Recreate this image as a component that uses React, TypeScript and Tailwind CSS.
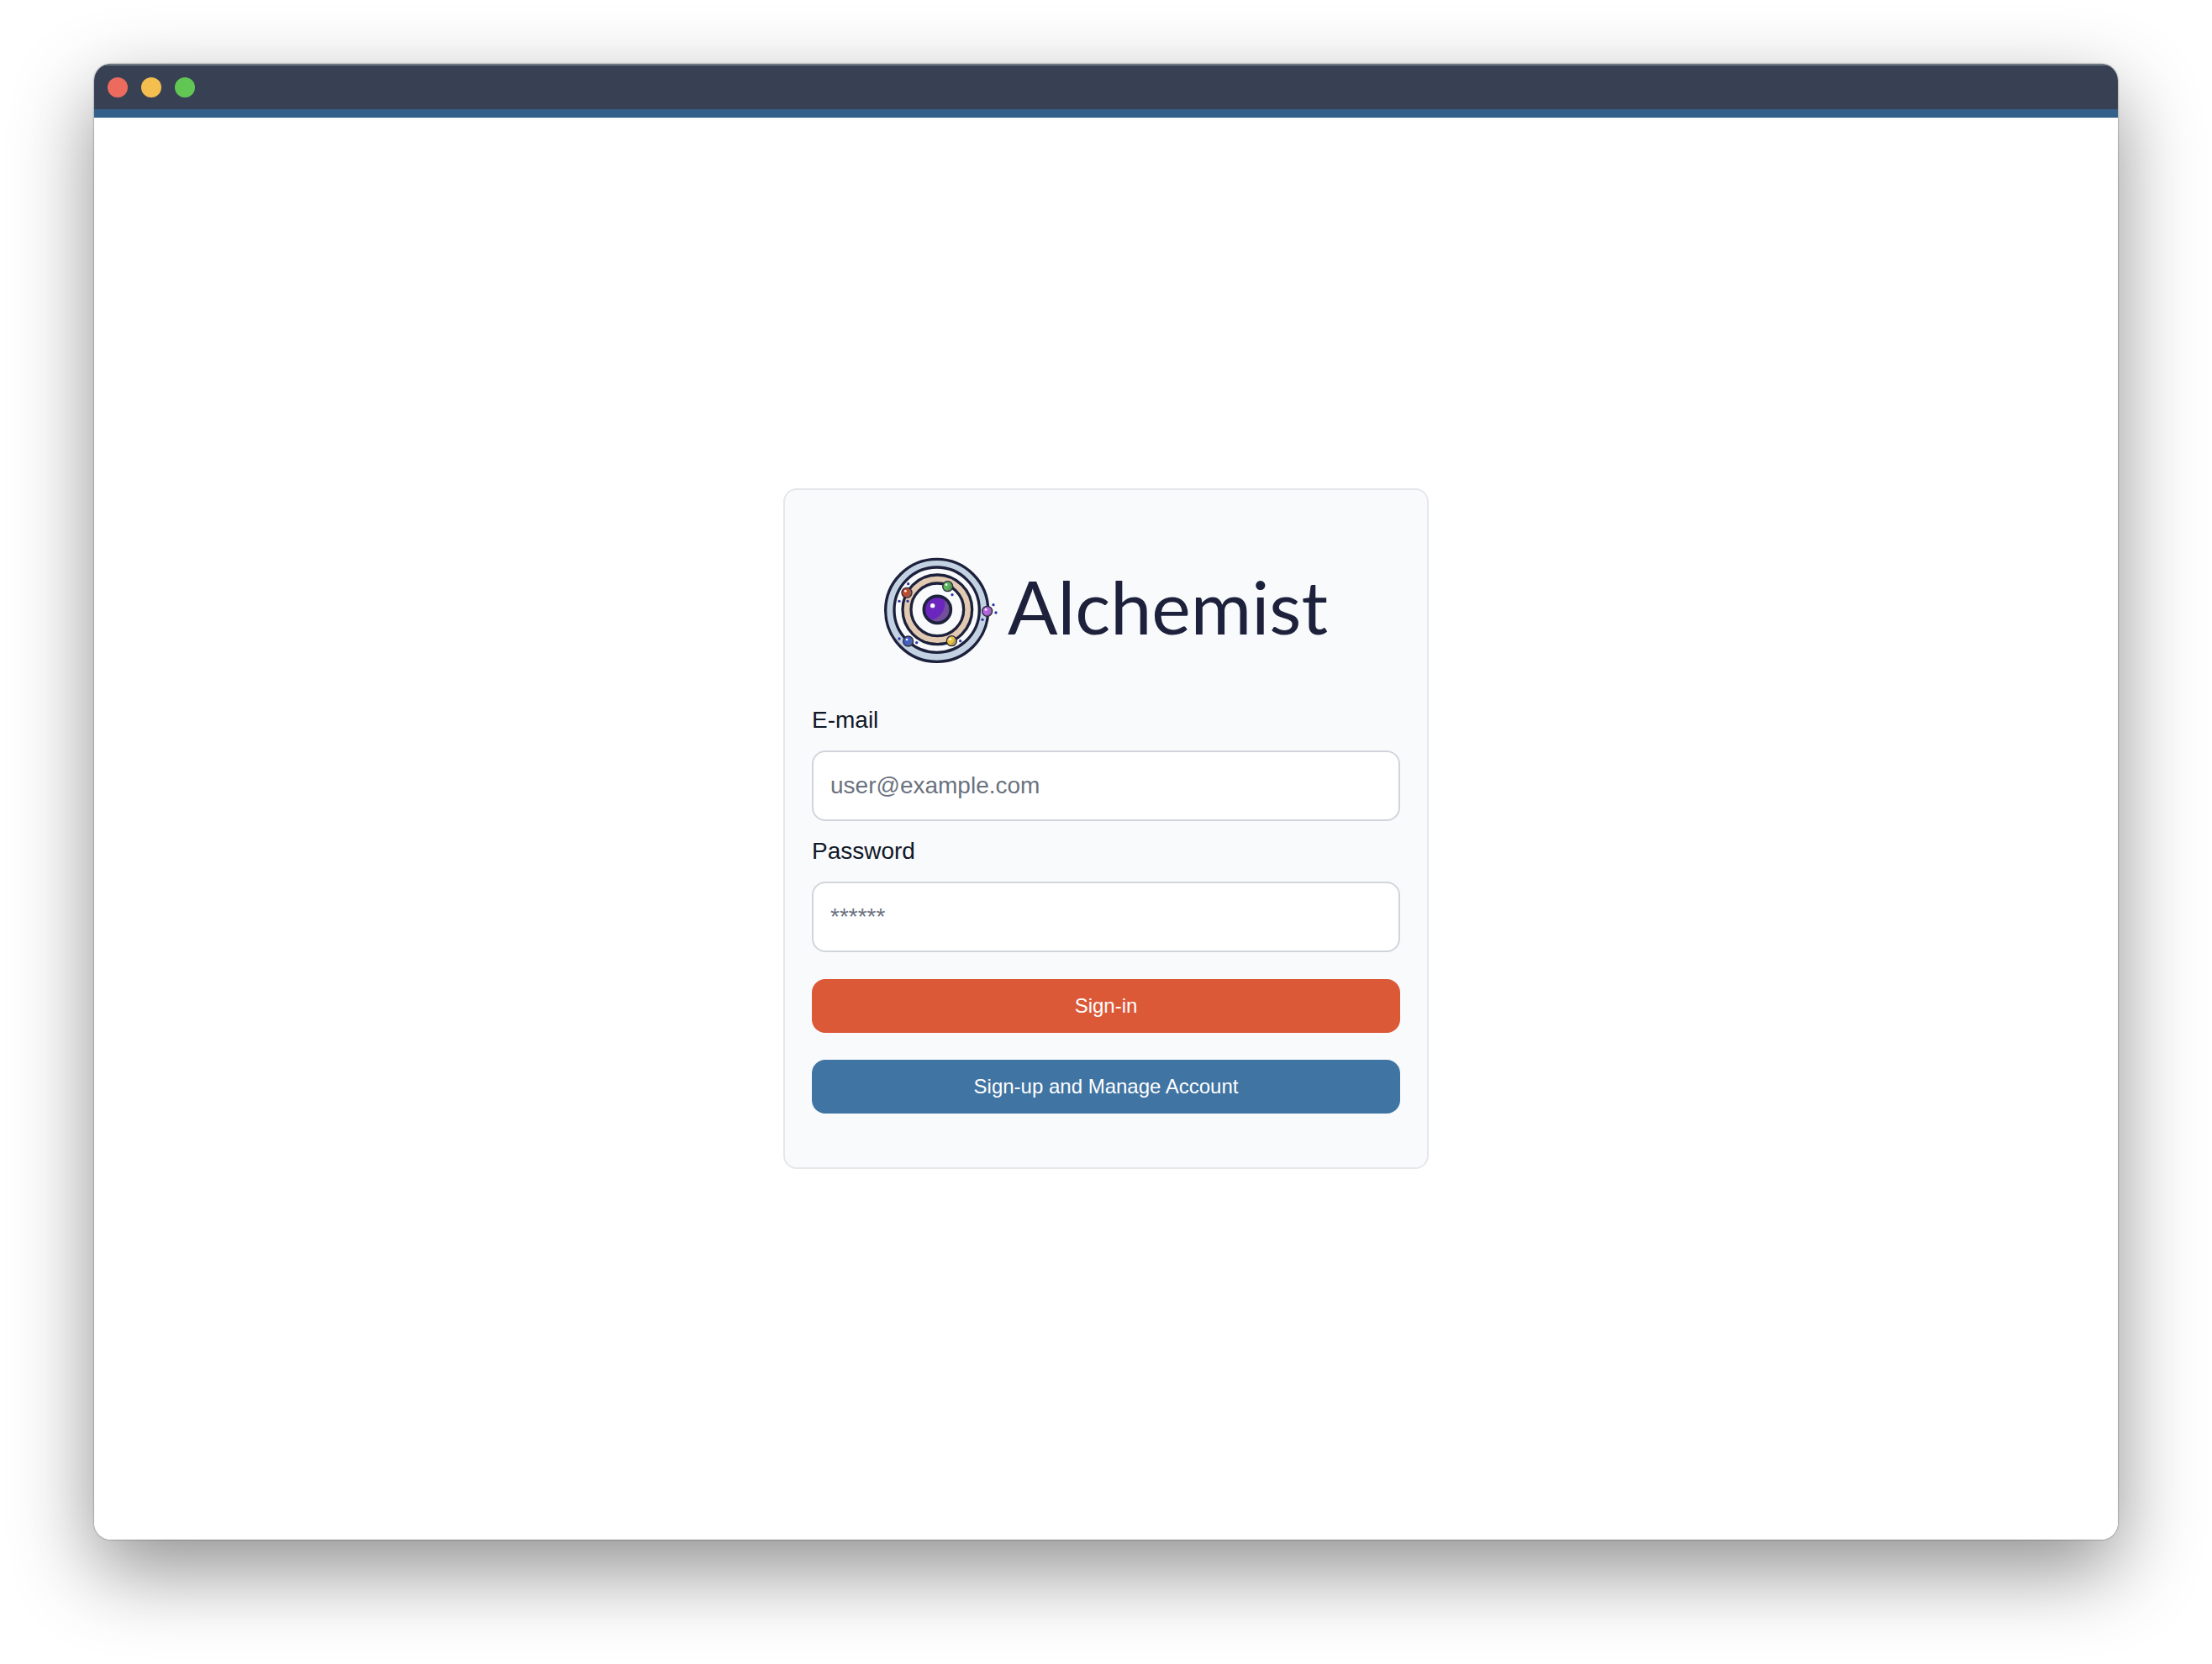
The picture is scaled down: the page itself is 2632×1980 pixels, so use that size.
import type { ReactNode } from "react";

const ink = "#1d213b";

const particles = [
  { cx: 126, cy: 133 },
  { cx: 94, cy: 195 },
  { cx: 124, cy: 195 },
  { cx: 283, cy: 172 },
  { cx: 430, cy: 208 },
  { cx: 439, cy: 236 },
  { cx: 391, cy: 261 },
  { cx: 94, cy: 329 },
  { cx: 156, cy: 343 },
  { cx: 312, cy: 337 },
];

const planets = [
  { cx: 121, cy: 165, fill: "#c3492b", shade: "#a2583f" },
  { cx: 267, cy: 142, fill: "#5bb55c", shade: "#5a9459" },
  { cx: 408, cy: 231, fill: "#b564e3", shade: "#9a64b4" },
  { cx: 126, cy: 338, fill: "#3f5fc9", shade: "#51649f" },
  { cx: 281, cy: 337, fill: "#e9c140", shade: "#b39f52" },
];

function LogoMark() {
  return (
    <svg
      aria-hidden="true"
      className="h-[127px] w-[135px] shrink-0"
      viewBox="40 38 405 381"
    >
      <g stroke={ink} strokeWidth="10">
        <circle cx="228" cy="228" r="183" fill="#c3d2e2" />
        <circle cx="228" cy="226" r="152" fill="#f9fafc" />
        <circle cx="230" cy="225" r="124" fill="#e2c9b2" />
        <circle cx="230" cy="225" r="94" fill="#f9fafc" />
      </g>
      <circle cx="230" cy="225" r="48" fill="#734f9b" />
      <path
        d="M254 183 A48 48 0 1 0 202 264 A62 62 0 0 0 254 183Z"
        fill="#6b27bd"
      />
      <circle cx="230" cy="225" r="48" fill="none" stroke={ink} strokeWidth="11" />
      <circle cx="213" cy="211" r="8" fill="#fff" />
      {particles.map((p) => (
        <circle key={`${p.cx}-${p.cy}`} cx={p.cx} cy={p.cy} r="5" fill="#2c35a8" />
      ))}
      {planets.map((p) => (
        <g key={p.fill} transform={`translate(${p.cx} ${p.cy})`}>
          <circle r="17" fill={p.shade} />
          <path d="M8 -15 A17 17 0 1 0 -8 15 A24 24 0 0 0 8 -15Z" fill={p.fill} />
          <circle r="18" fill="none" stroke="#2b2a3f" strokeWidth="4" />
          <circle cx="-5" cy="-6" r="4" fill="#fff" />
        </g>
      ))}
    </svg>
  );
}

type FieldProps = {
  id: string;
  label: string;
  type: string;
  placeholder: string;
};

function Field({ id, label, type, placeholder }: FieldProps) {
  return (
    <div className="flex flex-col gap-4">
      <label htmlFor={id} className="text-[28px] leading-10 text-gray-900">
        {label}
      </label>
      <input
        id={id}
        type={type}
        placeholder={placeholder}
        className="w-full rounded-2xl border-2 border-[#d1d5db] bg-white p-5 text-[28px] leading-10 text-gray-900 placeholder:text-[#6b7280]"
      />
    </div>
  );
}

function Window({ children }: { children: ReactNode }) {
  return (
    <div className="flex min-h-screen bg-white px-28 pt-[76px] pb-[148px] font-['Liberation_Sans',Arial,sans-serif]">
      <div className="flex flex-1 rounded-[20px] shadow-[0_0_2px_rgba(0,0,0,0.6),0_36px_96px_rgba(0,0,0,0.44)]">
        <div className="flex flex-1 flex-col overflow-hidden rounded-[20px] bg-white">
          <header className="flex items-center gap-4 border-t-2 border-b-[10px] border-t-[#6f7783] border-b-[#336189] bg-[#374153] px-4 py-[14px]">
            <button type="button" aria-label="Close" className="size-6 rounded-full bg-[#ed6a5e]" />
            <button type="button" aria-label="Minimize" className="size-6 rounded-full bg-[#f5bf4f]" />
            <button type="button" aria-label="Zoom" className="size-6 rounded-full bg-[#62c655]" />
          </header>
          {children}
        </div>
      </div>
    </div>
  );
}

export default function App() {
  return (
    <Window>
      <main className="flex flex-1 items-center justify-center">
        <form className="flex w-full max-w-3xl flex-col rounded-2xl border-2 border-[#e5e7eb] bg-[#f9fafc] px-8 pt-20 pb-16">
          <div className="mb-[47px] flex items-center justify-center gap-3">
            <LogoMark />
            <h1 className="pb-3 font-['Lato',sans-serif] text-[88px] leading-none font-normal text-[#1d213b]">
              Alchemist
            </h1>
          </div>
          <div className="mb-8 flex flex-col gap-4">
            <Field id="email" label="E-mail" type="email" placeholder="user@example.com" />
            <Field id="password" label="Password" type="password" placeholder="******" />
          </div>
          <div className="flex flex-col gap-8">
            <button
              type="submit"
              className="rounded-2xl bg-[#db5937] py-4 text-2xl text-white"
            >
              Sign-in
            </button>
            <button
              type="button"
              className="rounded-2xl bg-[#4074a3] py-4 text-2xl text-white"
            >
              Sign-up and Manage Account
            </button>
          </div>
        </form>
      </main>
    </Window>
  );
}
